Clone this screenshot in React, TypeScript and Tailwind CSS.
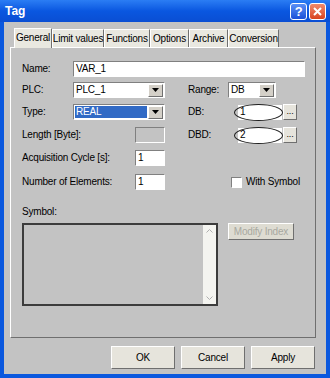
import React from "react";

const font = { fontFamily: '"Liberation Sans", Arial, sans-serif' };

function Sunken({ className = "", children }: { className?: string; children?: React.ReactNode }) {
  return (
    <div className={"border border-t-[#808080] border-l-[#808080] border-b-white border-r-white " + className}>
      {children}
    </div>
  );
}

function Arrow() {
  return (
    <div className="w-[15px] h-[13px] mr-[1px] bg-[#d4d0c8] border border-t-white border-l-white border-b-[#707070] border-r-[#707070] flex items-center justify-center">
      <svg width="7" height="4" viewBox="0 0 7 4"><path d="M0 0h7L3.5 4z" fill="#000" /></svg>
    </div>
  );
}

function Combo({ w, text, selected }: { w: string; text: string; selected?: boolean }) {
  return (
    <Sunken className={"h-[16px] bg-white flex items-center " + w}>
      <div className="flex-1 h-full flex items-center pl-[1px] pr-[1px]">
        <div className={"h-[12px] flex items-center pl-[1px] flex-1 " + (selected ? "bg-[#316ac5] text-white" : "text-black")}>{text}</div>
      </div>
      <Arrow />
    </Sunken>
  );
}

function Btn({ children, w, disabled }: { children: React.ReactNode; w: string; disabled?: boolean }) {
  return (
    <div
      className={
        "flex items-center justify-center whitespace-nowrap border border-t-white border-l-white border-b-[#6f6f6f] border-r-[#6f6f6f] " +
        (disabled ? "bg-[#dedcd2] text-[#a8a8a0] " : "bg-[#e6e4dc] text-black ") +
        w
      }
    >
      {children}
    </div>
  );
}

function OvalInput({ text }: { text: string }) {
  return (
    <div className="flex items-center">
      <div className="relative w-[49px] h-[17px]">
        <div className="absolute left-[4px] right-[1px] top-[1px] bottom-[1px] bg-white flex items-center pl-[2px]">{text}</div>
        <div className="absolute inset-0 rounded-[50%] border border-[#202020]" />
      </div>
      <Btn w="w-[14px] h-[16px] text-[9px] leading-none pb-[2px]">...</Btn>
    </div>
  );
}

export default function App() {
  const tabs: [string, string][] = [
    ["General", "w-[38px]"],
    ["Limit values", "w-[52px]"],
    ["Functions", "w-[46px]"],
    ["Options", "w-[39px]"],
    ["Archive", "w-[39px]"],
    ["Conversion", "w-[51px]"],
  ];
  return (
    <div className="w-[330px] h-[378px] bg-[#0b58de] flex flex-col text-[10px] leading-none tracking-[-0.2px] text-black" style={font}>
      {/* Title bar */}
      <div className="h-[22px] flex items-center pl-[5px] pr-[4px] bg-gradient-to-b from-[#2b7df4] via-[#0a57e0] to-[#0a4ed3]">
        <div className="text-white font-bold text-[12px] flex-1 tracking-normal">Tag</div>
        <div className="w-[17px] h-[17px] rounded-[3px] border border-white bg-gradient-to-b from-[#5a8ff5] to-[#1b4fd8] text-white font-bold text-[13px] flex items-center justify-center mr-[2px]">?</div>
        <div className="w-[17px] h-[17px] rounded-[3px] border border-white bg-gradient-to-b from-[#f08a6c] to-[#d8421c] flex items-center justify-center">
          <svg width="9" height="9" viewBox="0 0 9 9"><path d="M1 1l7 7M8 1l-7 7" stroke="#fff" strokeWidth="2" /></svg>
        </div>
      </div>
      {/* Body */}
      <div className="flex-1 mx-[4px] mb-[4px] bg-[#c3c3c3] flex flex-col pt-[6px] pl-[6px] pr-[10px]">
        {/* Tabs */}
        <div className="flex pl-[4px] h-[19px] items-end relative z-10">
          {tabs.map(([t, w], i) => (
            <div
              key={t}
              className={
                "flex items-center justify-center whitespace-nowrap text-black border-l border-t border-t-white border-l-white border-r border-r-[#6f6f6f] bg-[#e9e8e0] " +
                w +
                (i === 0 ? " h-[20px] -mb-[1px] pb-[1px]" : " h-[18px]")
              }
            >
              {t}
            </div>
          ))}
        </div>
        {/* Panel */}
        <div className="h-[291px] border border-t-white border-l-white border-b-[#6f6f6f] border-r-[#6f6f6f] flex flex-col pl-[11px] pt-[13px]">
          {/* Name */}
          <div className="flex items-center h-[16px]">
            <div className="w-[51px]">Name:</div>
            <Sunken className="w-[232px] h-[16px] bg-white flex items-center pl-[2px]">VAR_1</Sunken>
          </div>
          <div className="flex mt-[5px]">
            {/* Left */}
            <div className="w-[143px] flex flex-col">
              <div className="flex items-center h-[16px]">
                <div className="w-[51px]">PLC:</div>
                <Combo w="w-[92px]" text="PLC_1" />
              </div>
              <div className="flex items-center h-[16px] mt-[6px]">
                <div className="w-[51px]">Type:</div>
                <Combo w="w-[92px]" text="REAL" selected />
              </div>
              <div className="flex items-center h-[16px] mt-[7px]">
                <div className="w-[113px] text-black">Length [Byte]:</div>
                <Sunken className="w-[30px] h-[16px] bg-[#c3c3c3]" />
              </div>
              <div className="flex items-center h-[16px] mt-[7px]">
                <div className="w-[113px]">Acquisition Cycle [s]:</div>
                <Sunken className="w-[30px] h-[16px] bg-white flex items-center pl-[2px]">1</Sunken>
              </div>
              <div className="flex items-center h-[16px] mt-[8px]">
                <div className="w-[113px]">Number of Elements:</div>
                <Sunken className="w-[30px] h-[16px] bg-white flex items-center pl-[2px]">1</Sunken>
              </div>
            </div>
            {/* Right */}
            <div className="flex flex-col ml-[23px]">
              <div className="flex items-center h-[16px]">
                <div className="w-[40px]">Range:</div>
                <Combo w="w-[48px]" text="DB" />
              </div>
              <div className="flex items-center h-[16px] mt-[6px]">
                <div className="w-[46px]">DB:</div>
                <OvalInput text="1" />
              </div>
              <div className="flex items-center h-[16px] mt-[7px]">
                <div className="w-[46px]">DBD:</div>
                <OvalInput text="2" />
              </div>
              <div className="flex items-center h-[16px] mt-[31px] ml-[43px]">
                <Sunken className="w-[11px] h-[11px] bg-white mr-[4px]" />
                <div>With Symbol</div>
              </div>
            </div>
          </div>
          {/* Symbol */}
          <div className="mt-[17px] h-[10px]">Symbol:</div>
          <div className="flex mt-[6px]">
            <div className="w-[196px] h-[83px] border-2 border-[#3c3c3c] bg-[#c3c3c3] flex justify-end">
              <div className="w-[13px] h-full bg-[#f4f4f0] flex flex-col justify-between items-center py-[3px]">
                <svg width="7" height="5" viewBox="0 0 7 5"><path d="M0.5 4.5L3.5 1.5L6.5 4.5" stroke="#b0b0b0" fill="none" /></svg>
                <svg width="7" height="5" viewBox="0 0 7 5"><path d="M0.5 0.5L3.5 3.5L6.5 0.5" stroke="#b0b0b0" fill="none" /></svg>
              </div>
            </div>
            <div className="ml-[10px]">
              <Btn w="w-[66px] h-[17px]" disabled>Modify Index</Btn>
            </div>
          </div>
        </div>
        {/* Bottom buttons */}
        <div className="flex justify-end gap-[6px] mt-[8px] pr-[1px]">
          <Btn w="w-[64px] h-[23px]">OK</Btn>
          <Btn w="w-[64px] h-[23px]">Cancel</Btn>
          <Btn w="w-[64px] h-[23px]">Apply</Btn>
        </div>
      </div>
    </div>
  );
}
